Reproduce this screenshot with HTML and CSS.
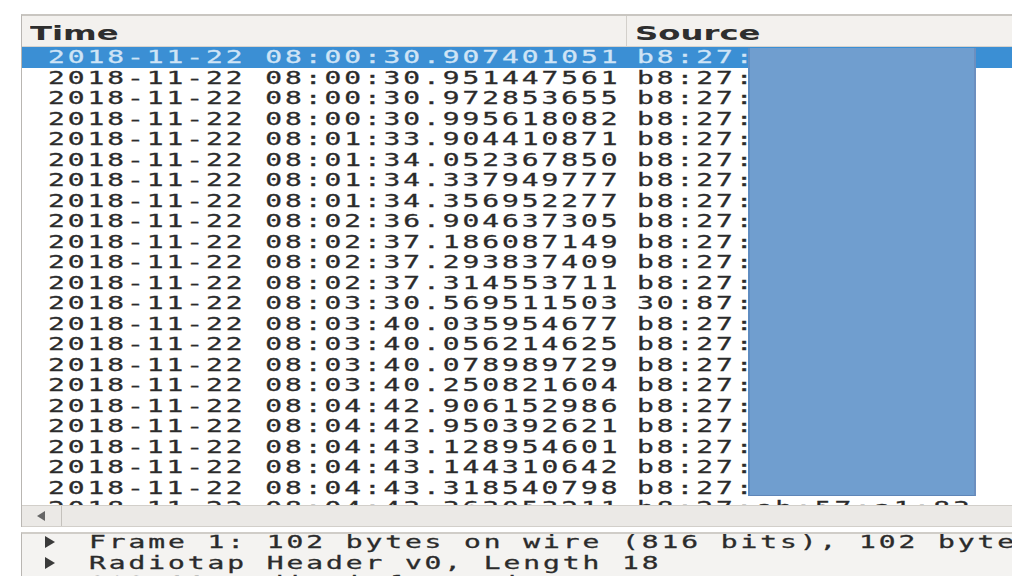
FILE: index.html
```html
<!DOCTYPE html>
<html lang="en">
  <head>
    <meta charset="UTF-8" />
    <title>Packet List</title>
    <link rel="stylesheet" href="styles.css">
  </head>
  <body>
    <!-- Packet list -->
    <div class="packetList">
      <div class="listHeader">
        <div class="col time"><span class="hdr">Time</span></div>
        <div class="col source"><span class="hdr">Source</span></div>
      </div>

      <div class="rows">
        <div class="row selected"><div class="col time"><span class="mono">2018-11-22 08:00:30.907401051</span></div><div class="col source"><span class="mono">b8:27:</span></div></div>
        <div class="row"><div class="col time"><span class="mono">2018-11-22 08:00:30.951447561</span></div><div class="col source"><span class="mono">b8:27:</span></div></div>
        <div class="row"><div class="col time"><span class="mono">2018-11-22 08:00:30.972853655</span></div><div class="col source"><span class="mono">b8:27:</span></div></div>
        <div class="row"><div class="col time"><span class="mono">2018-11-22 08:00:30.995618082</span></div><div class="col source"><span class="mono">b8:27:</span></div></div>
        <div class="row"><div class="col time"><span class="mono">2018-11-22 08:01:33.904410871</span></div><div class="col source"><span class="mono">b8:27:</span></div></div>
        <div class="row"><div class="col time"><span class="mono">2018-11-22 08:01:34.052367850</span></div><div class="col source"><span class="mono">b8:27:</span></div></div>
        <div class="row"><div class="col time"><span class="mono">2018-11-22 08:01:34.337949777</span></div><div class="col source"><span class="mono">b8:27:</span></div></div>
        <div class="row"><div class="col time"><span class="mono">2018-11-22 08:01:34.356952277</span></div><div class="col source"><span class="mono">b8:27:</span></div></div>
        <div class="row"><div class="col time"><span class="mono">2018-11-22 08:02:36.904637305</span></div><div class="col source"><span class="mono">b8:27:</span></div></div>
        <div class="row"><div class="col time"><span class="mono">2018-11-22 08:02:37.186087149</span></div><div class="col source"><span class="mono">b8:27:</span></div></div>
        <div class="row"><div class="col time"><span class="mono">2018-11-22 08:02:37.293837409</span></div><div class="col source"><span class="mono">b8:27:</span></div></div>
        <div class="row"><div class="col time"><span class="mono">2018-11-22 08:02:37.314553711</span></div><div class="col source"><span class="mono">b8:27:</span></div></div>
        <div class="row"><div class="col time"><span class="mono">2018-11-22 08:03:30.569511503</span></div><div class="col source"><span class="mono">30:87:</span></div></div>
        <div class="row"><div class="col time"><span class="mono">2018-11-22 08:03:40.035954677</span></div><div class="col source"><span class="mono">b8:27:</span></div></div>
        <div class="row"><div class="col time"><span class="mono">2018-11-22 08:03:40.056214625</span></div><div class="col source"><span class="mono">b8:27:</span></div></div>
        <div class="row"><div class="col time"><span class="mono">2018-11-22 08:03:40.078989729</span></div><div class="col source"><span class="mono">b8:27:</span></div></div>
        <div class="row"><div class="col time"><span class="mono">2018-11-22 08:03:40.250821604</span></div><div class="col source"><span class="mono">b8:27:</span></div></div>
        <div class="row"><div class="col time"><span class="mono">2018-11-22 08:04:42.906152986</span></div><div class="col source"><span class="mono">b8:27:</span></div></div>
        <div class="row"><div class="col time"><span class="mono">2018-11-22 08:04:42.950392621</span></div><div class="col source"><span class="mono">b8:27:</span></div></div>
        <div class="row"><div class="col time"><span class="mono">2018-11-22 08:04:43.128954601</span></div><div class="col source"><span class="mono">b8:27:</span></div></div>
        <div class="row"><div class="col time"><span class="mono">2018-11-22 08:04:43.144310642</span></div><div class="col source"><span class="mono">b8:27:</span></div></div>
        <div class="row"><div class="col time"><span class="mono">2018-11-22 08:04:43.318540798</span></div><div class="col source"><span class="mono">b8:27:</span></div></div>
        <div class="row"><div class="col time"><span class="mono">2018-11-22 08:04:43.363053211</span></div><div class="col source"><span class="mono">b8:27:eb:57:a1:83</span></div></div>

        <!-- redacted addresses -->
        <div class="redact"></div>
      </div>

      <!-- horizontal scrollbar -->
      <div class="hscroll">
        <div class="arrowBtn"><span class="arrowLeft"></span></div>
      </div>
    </div>

    <!-- Packet details -->
    <div class="details">
      <div class="detailRow"><span class="expander"></span><span class="mono">Frame 1: 102 bytes on wire (816 bits), 102 bytes captured</span></div>
      <div class="detailRow"><span class="expander"></span><span class="mono">Radiotap Header v0, Length 18</span></div>
      <div class="detailRow"><span class="expander"></span><span class="mono">802.11 radio information</span></div>
    </div>
  </body>
</html>
```

FILE: styles.css
```css
* {
  margin: 0;
  padding: 0;
  box-sizing: border-box;
}

html,
body {
  background: #fff;
  color: #2b2b2b;
  font-family: "DejaVu Sans", sans-serif;
  overflow: hidden;
}

.mono {
  display: inline-block;
  font-family: "DejaVu Sans Mono", monospace;
  font-size: 18px;
  letter-spacing: 1.9px;
  white-space: nowrap;
  transform: scaleX(1.55);
  transform-origin: left center;
  -webkit-text-stroke: 0.3px currentColor;
}

.hdr {
  display: inline-block;
  font-weight: bold;
  font-size: 19px;
  color: #2e2e2e;
  white-space: nowrap;
  transform: scaleX(1.7);
  transform-origin: left center;
}

/* packet list */
.packetList {
  margin: 14px 0 0 21px;
  width: 991px;
  border-left: 1px solid #b9b6b2;
  border-top: 2px solid #c9c6c1;
}

.listHeader {
  display: flex;
  height: 31px;
  align-items: center;
  background: #f3f1ee;
  border-bottom: 1px solid #d6d3ce;
}

.listHeader .time {
  width: 605px;
  padding: 4px 0 0 8px;
  border-right: 1px solid #d3d0cb;
  height: 100%;
  display: flex;
  align-items: center;
}

.listHeader .source {
  padding: 4px 0 0 8px;
}

.rows {
  position: relative;
  height: 458px;
  overflow: hidden;
}

.row {
  display: flex;
  height: 20.5px;
  line-height: 20.5px;
  overflow: hidden;
}

.row .time {
  width: 590px;
  padding-left: 26px;
}

.row .source {
  padding-left: 25px;
}

.row.selected {
  background: #3b8fd4;
  color: #cfe4f6;
}

.redact {
  position: absolute;
  left: 726px;
  top: 1px;
  width: 228px;
  height: 448px;
  background: #709ecf;
  border-left: 2px solid #5f8dc2;
  border-right: 2px solid #6c8fbf;
  border-bottom: 1px solid #5f86b8;
}

.hscroll {
  height: 22px;
  background: #ebe9e6;
  border-top: 1px solid #d2cfca;
  border-bottom: 1px solid #d2cfca;
  display: flex;
}

.arrowBtn {
  width: 40px;
  border-right: 1px solid #c4c1bc;
  display: flex;
  align-items: center;
  padding-left: 15px;
}

.arrowLeft {
  width: 0;
  height: 0;
  border-top: 5px solid transparent;
  border-bottom: 5px solid transparent;
  border-right: 8px solid #666;
}

/* packet details */
.details {
  margin: 5px 0 0 21px;
  width: 991px;
  height: 60px;
  background: #f4f3f1;
  border-left: 1px solid #b9b6b2;
  border-top: 2px solid #d0cdc8;
  overflow: hidden;
}

.detailRow {
  display: flex;
  align-items: center;
  height: 20.5px;
  line-height: 20.5px;
  white-space: nowrap;
  margin-top: -2px;
  margin-bottom: 2px;
}

.expander {
  width: 0;
  height: 0;
  margin: 0 34px 0 23px;
  border-top: 6px solid transparent;
  border-bottom: 6px solid transparent;
  border-left: 10px solid #3a3a3a;
}
```
